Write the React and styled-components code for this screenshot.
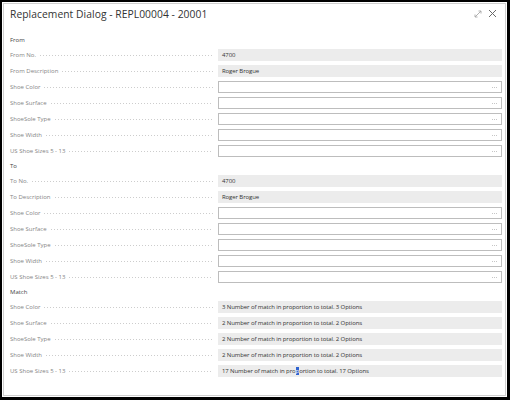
import React from 'react';
import styled, { createGlobalStyle } from 'styled-components';

const GlobalStyle = createGlobalStyle`
  html, body {
    margin: 0;
    padding: 0;
    background: #000;
  }
  body {
    font-family: "Open Sans", "Noto Sans", "Liberation Sans", sans-serif;
  }
`;

const Frame = styled.div`
  width: 510px;
  height: 400px;
  box-sizing: border-box;
  padding: 2px 3px 3px 2px;
`;

const Dialog = styled.div`
  height: 100%;
  box-sizing: border-box;
  background: #fff;
  border: 1px solid #fff;
  box-shadow: inset 0 0 0 1px #cfcfcf;
  display: flex;
  flex-direction: column;
`;

const TitleBar = styled.div`
  height: 21px;
  display: flex;
  align-items: center;
  padding: 0 8px 0 7px;
`;

const Title = styled.div`
  flex: 1;
  font-size: 10.3px;
  color: #333;
  letter-spacing: 0.05px;
`;

const IconButton = styled.span`
  display: inline-flex;
  align-items: center;
  justify-content: center;
  width: 12px;
  height: 12px;
  margin-left: ${p => p.$gap || 0}px;
`;

const Body = styled.div`
  padding: 9px 4px 0 7px;
  display: flex;
  flex-direction: column;
`;

const SectionHeader = styled.div`
  height: 14px;
  display: flex;
  align-items: center;
  font-size: 6px;
  color: #444;
`;

const Row = styled.div`
  height: 16px;
  display: grid;
  grid-template-columns: 208px 284px;
  align-items: center;
`;

const Label = styled.div`
  display: flex;
  align-items: center;
  font-size: 6px;
  color: #858585;
  white-space: nowrap;

  &::after {
    content: '';
    flex: 1;
    height: 1px;
    margin: 1px 5px 0 4px;
    background-image: linear-gradient(to right, #cdcdcd 1px, transparent 1px);
    background-size: 3px 1px;
    background-repeat: repeat-x;
  }
`;

const Field = styled.div`
  height: 12px;
  box-sizing: border-box;
  display: flex;
  align-items: center;
  padding: 0 3px;
  font-size: 6px;
  letter-spacing: -0.1px;
  color: #333;
  white-space: nowrap;
  background: ${p => (p.$editable ? '#fff' : '#ececec')};
  border: 1px solid ${p => (p.$editable ? '#bdbdbd' : '#ececec')};
`;

const FieldText = styled.span`
  flex: 1;
`;

const Lookup = styled.span`
  width: 5px;
  height: 1px;
  margin-right: 1px;
  background-image: linear-gradient(to right, #c6c6c6 1px, transparent 1px);
  background-size: 2px 1px;
  background-repeat: repeat-x;
`;

const Selected = styled.span`
  background: #2f63d0;
  color: #fff;
`;

const ExpandIcon = () => (
  <svg width="8" height="8" viewBox="0 0 8 8">
    <path d="M1 7 L7 1 M4.5 1 H7 V3.5 M1 4.5 V7 H3.5" stroke="#a8a8a8" strokeWidth="0.9" fill="none" />
  </svg>
);

const CloseIcon = () => (
  <svg width="9" height="9" viewBox="0 0 9 9">
    <path d="M1 1 L8 8 M8 1 L1 8" stroke="#6a6a6a" strokeWidth="1" fill="none" />
  </svg>
);

const sections = [
  {
    name: 'From',
    rows: [
      { label: 'From No.', value: '4700' },
      { label: 'From Description', value: 'Roger Brogue' },
      { label: 'Shoe Color', editable: true },
      { label: 'Shoe Surface', editable: true },
      { label: 'ShoeSole Type', editable: true },
      { label: 'Shoe Width', editable: true },
      { label: 'US Shoe Sizes 5 - 13', editable: true },
    ],
  },
  {
    name: 'To',
    rows: [
      { label: 'To No.', value: '4700' },
      { label: 'To Description', value: 'Roger Brogue' },
      { label: 'Shoe Color', editable: true },
      { label: 'Shoe Surface', editable: true },
      { label: 'ShoeSole Type', editable: true },
      { label: 'Shoe Width', editable: true },
      { label: 'US Shoe Sizes 5 - 13', editable: true },
    ],
  },
  {
    name: 'Match',
    rows: [
      { label: 'Shoe Color', value: '3 Number of match in proportion to total. 3 Options' },
      { label: 'Shoe Surface', value: '2 Number of match in proportion to total. 2 Options' },
      { label: 'ShoeSole Type', value: '2 Number of match in proportion to total. 2 Options' },
      { label: 'Shoe Width', value: '2 Number of match in proportion to total. 2 Options' },
      { label: 'US Shoe Sizes 5 - 13', cursor: true },
    ],
  },
];

const renderValue = row => {
  if (row.cursor) {
    return (
      <FieldText>
        17 Number of match in pro<Selected>p</Selected>ortion to total. 17 Options
      </FieldText>
    );
  }
  return <FieldText>{row.value}</FieldText>;
};

export default function App() {
  return (
    <>
      <GlobalStyle />
      <Frame>
        <Dialog>
          <TitleBar>
            <Title>Replacement Dialog - REPL00004 - 20001</Title>
            <IconButton><ExpandIcon /></IconButton>
            <IconButton $gap={2}><CloseIcon /></IconButton>
          </TitleBar>
          <Body>
            {sections.map(section => (
              <React.Fragment key={section.name}>
                <SectionHeader>{section.name}</SectionHeader>
                {section.rows.map(row => (
                  <Row key={section.name + row.label}>
                    <Label>{row.label}</Label>
                    <Field $editable={row.editable}>
                      {renderValue(row)}
                      {row.editable && <Lookup />}
                    </Field>
                  </Row>
                ))}
              </React.Fragment>
            ))}
          </Body>
        </Dialog>
      </Frame>
    </>
  );
}
